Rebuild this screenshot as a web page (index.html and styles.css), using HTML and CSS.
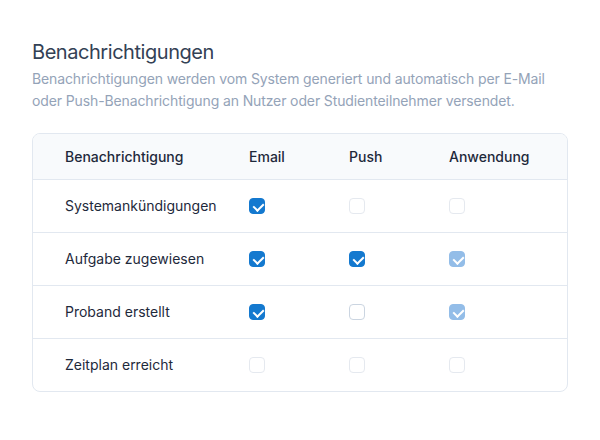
FILE: index.html
```html
<!DOCTYPE html>
<html lang="de">
<head>
<meta charset="utf-8">
<link rel="stylesheet" href="styles.css">
</head>
<body>
<main class="page">
  <h1 class="title">Benachrichtigungen</h1>
  <p class="desc">Benachrichtigungen werden vom System generiert und automatisch per E-Mail oder Push-Benachrichtigung an Nutzer oder Studienteilnehmer versendet.</p>
  <div class="card">
    <table class="grid">
      <colgroup>
        <col class="c-name"><col class="c-opt"><col class="c-opt"><col>
      </colgroup>
      <thead>
        <tr><th>Benachrichtigung</th><th>Email</th><th>Push</th><th>Anwendung</th></tr>
      </thead>
      <tbody>
        <tr>
          <td>Systemankündigungen</td>
          <td><span class="cb on"></span></td>
          <td><span class="cb dis"></span></td>
          <td><span class="cb dis"></span></td>
        </tr>
        <tr>
          <td>Aufgabe zugewiesen</td>
          <td><span class="cb on"></span></td>
          <td><span class="cb on"></span></td>
          <td><span class="cb on-dis"></span></td>
        </tr>
        <tr>
          <td>Proband erstellt</td>
          <td><span class="cb on"></span></td>
          <td><span class="cb off"></span></td>
          <td><span class="cb on-dis"></span></td>
        </tr>
        <tr>
          <td>Zeitplan erreicht</td>
          <td><span class="cb dis"></span></td>
          <td><span class="cb dis"></span></td>
          <td><span class="cb dis"></span></td>
        </tr>
      </tbody>
    </table>
  </div>
</main>
</body>
</html>
```
FILE: styles.css
```css
* { box-sizing: border-box; }
html, body { margin: 0; background: #ffffff; }
body {
  font-family: Inter, "Noto Sans", "Liberation Sans", sans-serif;
  color: #1e293b;
}
.page { padding: 38px 32px 0 32px; width: 600px; }
.title {
  margin: 0;
  font-size: 20px;
  line-height: 28px;
  font-weight: 400;
  letter-spacing: -0.45px;
  color: #334155;
}
.desc {
  margin: 2px 0 0 0;
  font-size: 14px;
  line-height: 22px;
  letter-spacing: -0.12px;
  color: #94a3b8;
}
.card {
  margin-top: 21px;
  width: 536px;
  border: 1px solid #e2e8f0;
  border-radius: 8px;
  overflow: hidden;
}
.grid {
  width: 100%;
  border-collapse: collapse;
  table-layout: fixed;
  font-size: 14px;
}
.c-name { width: 216px; }
.c-opt { width: 100px; }
.grid th {
  background: #f8fafc;
  font-weight: 500;
  text-align: left;
  height: 45px;
  padding: 0;
  color: #1e293b;
  border-bottom: 1px solid #e2e8f0;
}
.grid td {
  height: 53px;
  padding: 0;
  border-bottom: 1px solid #e2e8f0;
}
.grid tbody tr:last-child td { border-bottom: 0; height: 53px; }
.grid th:first-child, .grid td:first-child { padding-left: 32px; }
.cb {
  display: block;
  width: 16px;
  height: 16px;
  border-radius: 4px;
  border: 1px solid #cbd5e1;
  background: #fff;
  position: relative;
}
.cb.dis { border-color: #e5e9ef; }
.cb.on { background: #1479cf; border-color: #1479cf; }
.cb.on-dis { background: #93bde8; border-color: #93bde8; }
.cb.on::after, .cb.on-dis::after {
  content: "";
  position: absolute;
  left: 4.5px;
  top: 2.5px;
  width: 5px;
  height: 8px;
  border: solid #fff;
  border-width: 0 2.2px 2.2px 0;
  transform: rotate(45deg);
}
```
